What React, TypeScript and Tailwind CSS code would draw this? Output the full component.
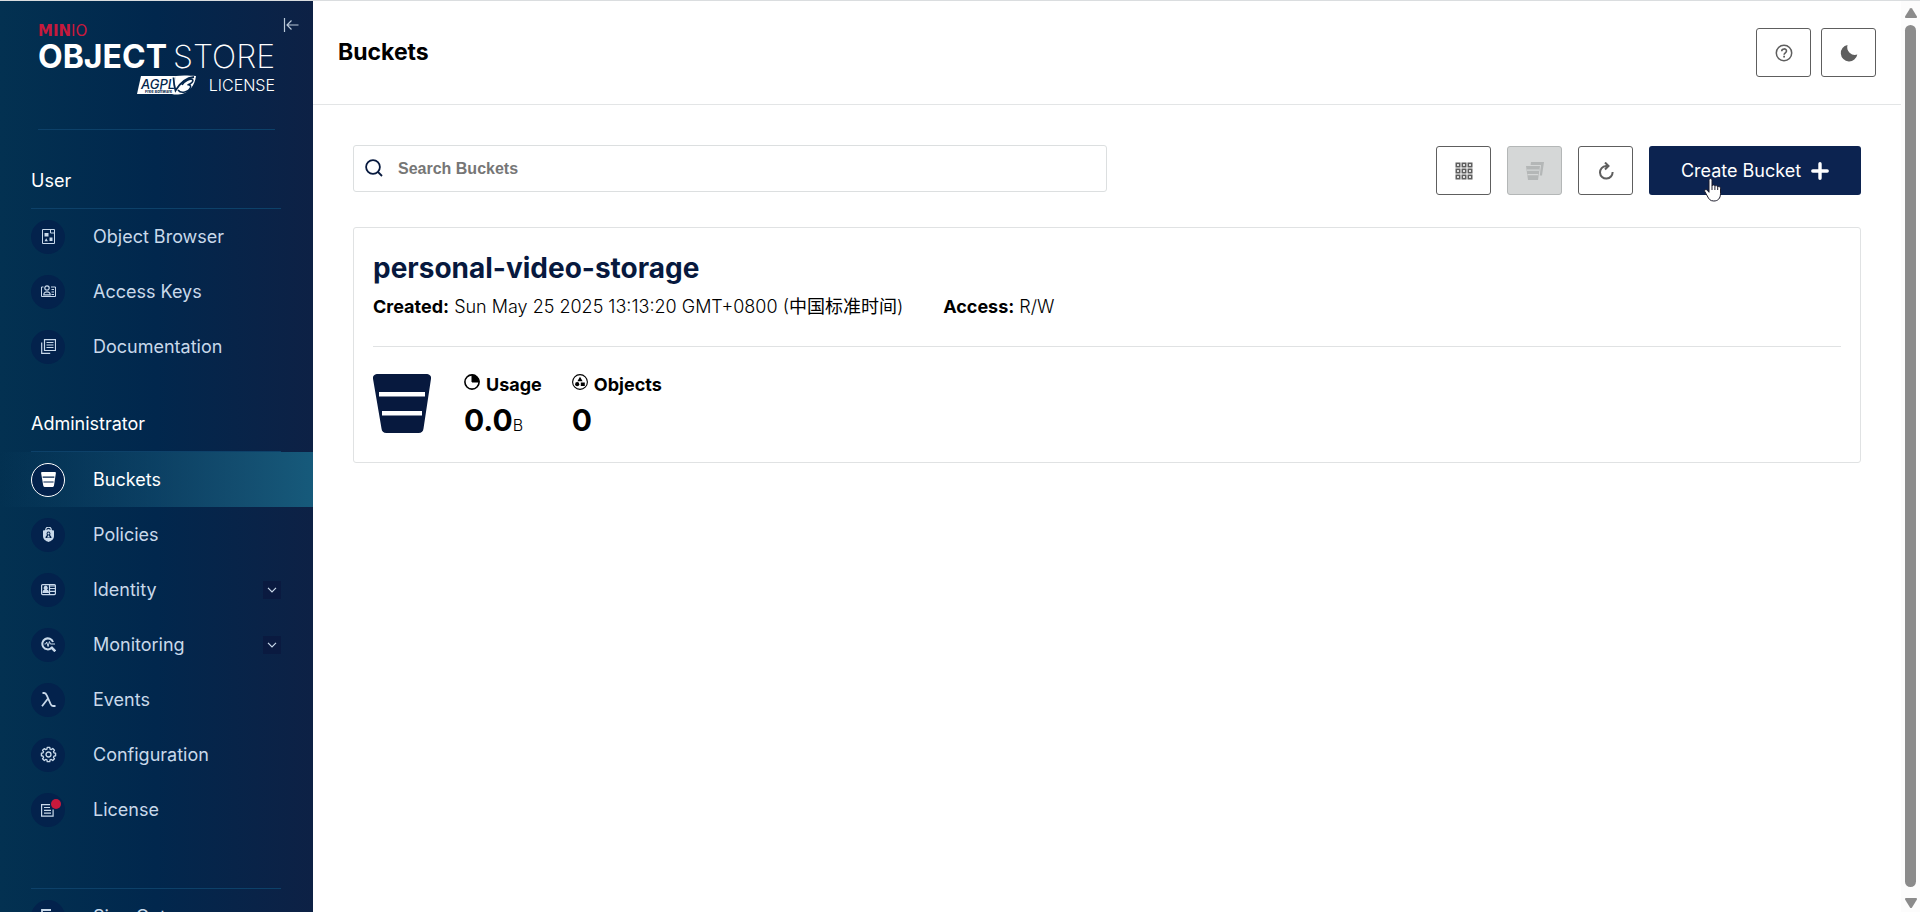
import type { ReactNode } from 'react'

type IconProps = { className?: string }

type NavEntry = {
  label: string
  icon: ReactNode
  active?: boolean
  expandable?: boolean
  alert?: boolean
}

function BucketIcon({ className }: IconProps) {
  return (
    <svg viewBox="0 0 58 59" className={className} fill="currentColor" fillRule="evenodd" aria-hidden="true">
      <path d="M4 0h50a4 4 0 0 1 4 4.800L50.500 54.500a5 5 0 0 1-5 4.500h-32a5 5 0 0 1-5-4.500L0 4.800A4 4 0 0 1 4 0ZM6 18v4.500h46V18ZM9 37v4.500h40V37Z" />
    </svg>
  )
}

function ObjectBrowserIcon() {
  return (
    <svg viewBox="0 0 15 15" className="size-[15px]" fill="none" stroke="currentColor" aria-hidden="true">
      <path d="M1.500.5h12v14h-12ZM9.500.5v3.500h4" />
      <path d="M3.500 4h4v3.500h-4ZM8.500 8.500h3V12h-3ZM3.500 12.200l1.700-3 1.700 3Z" fill="currentColor" stroke="none" />
    </svg>
  )
}

function AccessKeysIcon() {
  return (
    <svg viewBox="0 0 15 15" className="size-[15px]" fill="none" stroke="currentColor" aria-hidden="true">
      <path d="M2.500 3H.5v9.500h14V3H10" />
      <circle cx="6" cy="4" r="2.200" strokeWidth="1.200" />
      <path d="M2.800 10.800c0-4 6.400-4 6.400 0ZM10.500 5.500h2.500M10.500 8h2.500M10.500 10.500h2.500" strokeWidth="1.200" />
    </svg>
  )
}

function DocumentationIcon() {
  return (
    <svg viewBox="0 0 15 15" className="size-[15px]" fill="none" stroke="currentColor" aria-hidden="true">
      <path d="M3.500.7h11v10.800h-11ZM5.500 3.500h7M5.500 6h7M5.500 8.500h7M.7 3.500v10.800h8.500" strokeWidth="1.200" />
    </svg>
  )
}

function PoliciesIcon() {
  return (
    <svg viewBox="0 0 15 15" className="size-[15px]" fill="currentColor" aria-hidden="true">
      <path d="M4.700 4V3a2.800 2.800 0 0 1 5.600 0v1" fill="none" stroke="currentColor" strokeWidth="1.200" />
      <path
        fillRule="evenodd"
        d="M2 3.500c2.500 0 4-.8 5.500-1.500C9 2.700 10.500 3.500 13 3.500V9c0 3.500-3 5-5.500 6C5 14 2 12.500 2 9ZM7.500 4.600a2 2 0 0 0-1.300 3.500c-1 .5-1.700 1.500-1.700 3h6c0-1.500-.7-2.500-1.700-3A2 2 0 0 0 7.500 4.600Z"
      />
      <circle cx="7.500" cy="6.500" r="1" />
      <path d="M6 10.500h3L7.500 8Z" />
    </svg>
  )
}

function IdentityIcon() {
  return (
    <svg viewBox="0 0 15 15" className="size-[15px]" fill="none" stroke="currentColor" aria-hidden="true">
      <rect x=".6" y="2.600" width="13.800" height="10" rx="1" strokeWidth="1.200" />
      <path d="M8.500 2.500v10M8.500 4h6M8.500 6.500h6M8.500 9.300h6" strokeWidth="1.200" />
      <path d="M1.500 11c0-2 .8-3 2-3.400a2.100 2.100 0 1 1 2.400 0C7.200 8 8 9 8 11Z" fill="currentColor" stroke="none" />
    </svg>
  )
}

function MonitoringIcon() {
  return (
    <svg viewBox="0 0 15 15" className="size-[15px]" fill="none" stroke="currentColor" aria-hidden="true">
      <path d="M10.500 11A5.500 5.500 0 1 1 12 5" strokeWidth="2" />
      <path d="m10 10 4.300 4.300" strokeWidth="2.600" />
      <path d="M3.500 7h1.200l1-2 1.400 4.500 1.300-5 1 2.500h4.600" strokeWidth="1" />
    </svg>
  )
}

function EventsIcon() {
  return (
    <svg viewBox="0 0 15 15" className="size-[15px]" fill="none" stroke="currentColor" aria-hidden="true">
      <path d="M1.500 1h1.700c1.500 0 2 1 2.700 2.600l3.700 8.400c.6 1.500 1.300 2 2.400 2h2.500M7 6.500 1 14.200" strokeWidth="1.800" />
    </svg>
  )
}

function ConfigurationIcon() {
  return (
    <svg viewBox="0 0 24 24" className="size-[17px]" fill="none" stroke="currentColor" strokeWidth="1.900" strokeLinejoin="round" aria-hidden="true">
      <path d="m10.200 2-.4 2.400a8 8 0 0 0-1.800.7L6 3.700 3.600 6.100 5 8a8 8 0 0 0-.7 1.800L2 10.200v3.600l2.300.4A8 8 0 0 0 5 16l-1.400 2 2.500 2.400L8 19a8 8 0 0 0 1.800.7l.4 2.300h3.600l.4-2.300A8 8 0 0 0 16 19l2 1.400 2.400-2.500L19 16a8 8 0 0 0 .7-1.800l2.300-.4v-3.600l-2.300-.4A8 8 0 0 0 19 8l1.400-2L18 3.600 16 5a8 8 0 0 0-1.800-.7L13.800 2Z" />
      <circle cx="12" cy="12" r="3.500" />
    </svg>
  )
}

function LicenseIcon() {
  return (
    <svg viewBox="0 0 15 15" className="size-[15px]" fill="none" stroke="currentColor" aria-hidden="true">
      <path d="M9 2.600H.6v11.600h11.500V7.500M3 5.500h6M3 8.300h7M3 11.200h7" strokeWidth="1.200" />
    </svg>
  )
}

function SignOutIcon() {
  return (
    <svg viewBox="0 0 15 15" className="size-[15px]" fill="none" stroke="currentColor" strokeWidth="1.800" aria-hidden="true">
      <path d="M10 1H1v13h9M4 7.500h10M10.500 4 14 7.500 10.500 11" />
    </svg>
  )
}

function AgplBadge() {
  return (
    <svg viewBox="0 0 60 20" className="h-5 w-[60px]" aria-label="AGPL v3">
      <path d="M4 1h35l-2 18H0Z" fill="#fff" />
      <path d="M35 19 39 1c6-1 14-.5 20 0-1 9-7 18-18 18.500-3 0-5 0-6-.5Z" fill="#fff" />
      <path d="M36.500 2.500c.2 5 .8 9 2 13C43 8 48 3 57 2" fill="none" stroke="#04264c" strokeWidth="1.800" />
      <path d="M41 15c3 4 11 2 12.500-2.500.6-2-.8-3-3-2.600C54 9 57 6 55.500 4.600 53.500 3 47 6 45 10" fill="none" stroke="#04264c" strokeWidth="1.600" />
      <text x="4" y="13.500" fontFamily="Inter, sans-serif" fontSize="13" fontStyle="italic" fontWeight="500" fill="#04264c">AGPL</text>
      <text x="8" y="18" fontFamily="Inter, sans-serif" fontSize="4" fontWeight="700" fill="#04264c">Free Software</text>
    </svg>
  )
}

const userNav: NavEntry[] = [
  { label: 'Object Browser', icon: <ObjectBrowserIcon /> },
  { label: 'Access Keys', icon: <AccessKeysIcon /> },
  { label: 'Documentation', icon: <DocumentationIcon /> },
]

const adminNav: NavEntry[] = [
  { label: 'Buckets', icon: <BucketIcon className="size-[15px]" />, active: true },
  { label: 'Policies', icon: <PoliciesIcon /> },
  { label: 'Identity', icon: <IdentityIcon />, expandable: true },
  { label: 'Monitoring', icon: <MonitoringIcon />, expandable: true },
  { label: 'Events', icon: <EventsIcon /> },
  { label: 'Configuration', icon: <ConfigurationIcon /> },
  { label: 'License', icon: <LicenseIcon />, alert: true },
]

function NavItem({ label, icon, active, expandable, alert }: NavEntry) {
  return (
    <li>
      <a
        href="#"
        className={`flex h-[55px] items-center pl-[31px] pr-8 text-lg ${
          active ? 'bg-linear-to-r from-transparent to-[#165a7b] text-white' : 'text-[#c9d9ea]'
        }`}
      >
        <span
          className={`relative mr-7 flex size-[34px] items-center justify-center rounded-full bg-[#03224c] ${
            active ? 'border border-white' : ''
          }`}
        >
          {icon}
          {alert && <span className="absolute right-1 top-1.5 size-2.5 rounded-full bg-[#c8193c]" />}
        </span>
        {label}
        {expandable && (
          <span className="ml-auto flex size-[18px] items-center justify-center bg-[#0a1a40]">
            <svg viewBox="0 0 10 6" className="h-1.5 w-2.5" fill="none" stroke="currentColor" strokeWidth="1.200" aria-hidden="true">
              <path d="m1 .8 4 4 4-4" />
            </svg>
          </span>
        )}
      </a>
    </li>
  )
}

function NavSection({ title, items }: { title: string; items: NavEntry[] }) {
  return (
    <section>
      <h2 className="ml-[31px] mr-8 border-b border-[#0d4169] pb-[13px] text-lg text-white">{title}</h2>
      <ul>
        {items.map((item) => (
          <NavItem key={item.label} {...item} />
        ))}
      </ul>
    </section>
  )
}

function Sidebar() {
  return (
    <aside className="flex w-[313px] shrink-0 flex-col overflow-hidden bg-linear-to-r from-[#033151] via-[#01274d] to-[#0d2145]">
      <div className="relative mx-[38px] border-b border-[#0d4169] pb-[33px] pt-[22px] text-white">
        <button type="button" aria-label="Collapse menu" className="absolute -right-6 top-4 text-[#b9c8d8]">
          <svg viewBox="0 0 16 16" className="size-4" fill="none" stroke="currentColor" strokeWidth="1.200" aria-hidden="true">
            <path d="M1.500 1v14M15.500 8H4M8.500 3.500 4 8l4.500 4.500" />
          </svg>
        </button>
        <div className="flex items-baseline font-['DejaVu_Sans'] text-[15px] leading-4 text-[#c8193c]">
          <span className="font-bold">MIN</span>
          <span>IO</span>
        </div>
        <div className="flex justify-between whitespace-nowrap text-[32px] leading-[35px]">
          <span className="font-bold">OBJECT</span>
          <span className="font-extralight">STORE</span>
        </div>
        <div className="flex items-center justify-end gap-3 text-base font-light leading-[22px]">
          <AgplBadge />
          LICENSE
        </div>
      </div>

      <nav className="flex flex-col gap-9 pt-[37px]">
        <NavSection title="User" items={userNav} />
        <NavSection title="Administrator" items={adminNav} />
      </nav>

      <div className="mt-[51px] shrink-0">
        <div className="ml-[31px] mr-8 border-t border-[#0d4169]" />
        <ul>
          <NavItem label="Sign Out" icon={<SignOutIcon />} />
        </ul>
      </div>
    </aside>
  )
}

function IconButton({ label, disabled, children }: { label: string; disabled?: boolean; children: ReactNode }) {
  return (
    <button
      type="button"
      aria-label={label}
      disabled={disabled}
      className={`flex h-[49px] w-[55px] items-center justify-center rounded-[3px] border ${
        disabled ? 'border-[#b4b7b7] bg-[#d5d7d7] text-[#b4b7b7]' : 'border-[#5e5e5e] bg-white text-[#5e5e5e]'
      }`}
    >
      {children}
    </button>
  )
}

function PageHeader() {
  return (
    <header className="flex items-center justify-between border-b border-[#e3e5e6] px-[25px] py-[27px]">
      <h1 className="text-[23px] font-bold">Buckets</h1>
      <div className="flex gap-2.5">
        <IconButton label="Help">
          <svg viewBox="0 0 18 18" className="size-[18px]" fill="none" stroke="currentColor" aria-hidden="true">
            <circle cx="9" cy="9" r="7.700" strokeWidth="1.500" />
            <path d="M6.700 7.200c0-3 4.800-3 4.800-.2 0 1.900-2.400 1.700-2.400 3.700" strokeWidth="1.600" />
            <path d="M8.200 11.800h1.800v1.700H8.200Z" fill="currentColor" stroke="none" />
          </svg>
        </IconButton>
        <IconButton label="Dark mode">
          <svg viewBox="0 0 18 18" className="size-[18px]" fill="currentColor" aria-hidden="true">
            <path d="M7.500 1A8.300 8.300 0 1 0 17.300 10.500 7.800 7.800 0 0 1 7.500 1Z" />
          </svg>
        </IconButton>
      </div>
    </header>
  )
}

const gridCells = [0, 6, 12]

function Toolbar() {
  return (
    <div className="flex items-start justify-between">
      <div className="relative w-1/2">
        <svg viewBox="0 0 18 18" className="absolute left-3 top-3.5 size-[18px] text-[#07193e]" fill="none" stroke="currentColor" strokeWidth="1.800" aria-hidden="true">
          <circle cx="8" cy="8" r="6.900" />
          <path d="m13 13 4 4" />
        </svg>
        <input
          type="text"
          aria-label="Search Buckets"
          placeholder="Search Buckets"
          className="h-[47px] w-full rounded-[3px] border border-[#dcdfe0] pl-11 pr-4 font-['Liberation_Sans'] text-base font-bold outline-none placeholder:text-[#767676]"
        />
      </div>
      <div className="flex gap-4 pt-px">
        <IconButton label="Grid view">
          <svg viewBox="0 0 18 18" className="size-[18px]" fill="none" stroke="currentColor" strokeWidth="1.600" aria-hidden="true">
            {gridCells.map((y) => gridCells.map((x) => <rect key={`${x}-${y}`} x={x + 1.3} y={y + 1.3} width="3.400" height="3.400" />))}
          </svg>
        </IconButton>
        <IconButton label="Select multiple buckets" disabled>
          <svg viewBox="0 0 18 18" className="size-[18px]" fill="currentColor" aria-hidden="true">
            <path d="M5 0h13l-2 13.500h-2.200L15 3H4.600Z" />
            <path fillRule="evenodd" d="M0 4h14l-2 14H2ZM1 7.500v1.200h12V7.500ZM1.600 12v1.200h10.600V12Z" />
          </svg>
        </IconButton>
        <IconButton label="Refresh">
          <svg viewBox="0 0 18 18" className="size-[18px]" fill="none" stroke="currentColor" strokeWidth="2" aria-hidden="true">
            <path d="M10.800 4H9a6.300 6.300 0 1 0 6.600 6M8 .5 11.500 4 8 7.500" />
          </svg>
        </IconButton>
        <button type="button" className="relative flex h-[49px] w-[212px] items-center justify-center gap-2.5 rounded-[3px] bg-[#0c2350] text-lg text-white">
          Create Bucket
          <svg viewBox="0 0 18 18" className="size-[18px]" stroke="currentColor" strokeWidth="3.400" strokeLinecap="round" aria-hidden="true">
            <path d="M9 1.800v14.400M1.800 9h14.400" />
          </svg>
          {/* Pointer resting on the button */}
          <svg viewBox="0 0 18 24" className="absolute left-[55px] top-8 h-6 w-[18px]" fill="#fff" stroke="#1b1b2b" aria-hidden="true">
            <path d="M5 2.200c0-2.200 3-2.200 3 0V8c.3-1.500 2.800-1.300 2.900.4.600-1.300 2.700-.9 2.800.7.700-1.100 2.800-.7 2.800 1.200v5.200c0 5-2.600 7.500-6.700 7.500-3.700 0-5-2-6.500-5L.8 13.500c-.8-1.700 1.200-2.800 2.400-1.300L5 14.300Z" />
            <path d="M8 8v4M10.900 8.500V12M13.700 9.200V12" />
          </svg>
        </button>
      </div>
    </div>
  )
}

function BucketCard() {
  return (
    <article className="mt-8 rounded-[3px] border border-[#e0e2e3] px-[19px] pb-[18px] pt-5">
      <h2 className="text-[28px] font-bold leading-10 text-[#07193e]">personal-video-storage</h2>
      <div className="flex gap-10 border-b border-[#e0e2e3] pb-[25px] pt-[5px] text-lg leading-7">
        <p>
          <b>Created:</b> <span className="font-light">Sun May 25 2025 13:13:20 GMT+0800 (</span>中国标准时间<span className="font-light">)</span>
        </p>
        <p>
          <b>Access:</b> <span className="font-light">R/W</span>
        </p>
      </div>
      <div className="flex pt-[27px]">
        <BucketIcon className="mr-[33px] h-[59px] w-[58px] text-[#07193e]" />
        <div className="mr-[30px]">
          <div className="flex gap-1.5 text-lg font-bold leading-[22px]">
            <svg viewBox="0 0 16 16" className="size-4" fill="none" stroke="currentColor" aria-hidden="true">
              <circle cx="8" cy="8" r="7.100" strokeWidth="1.600" />
              <path d="M8 1v7h7a7 7 0 0 0-7-7Z" fill="currentColor" />
            </svg>
            Usage
          </div>
          <div className="text-[30px] font-bold leading-[48px]">
            0.0<span className="text-base font-light">B</span>
          </div>
        </div>
        <div>
          <div className="flex gap-1.5 text-lg font-bold leading-[22px]">
            <svg viewBox="0 0 16 16" className="size-4" fill="currentColor" aria-hidden="true">
              <circle cx="8" cy="8" r="7.400" fill="none" stroke="currentColor" strokeWidth="1.100" />
              <path d="m8 2.800 2.600 4.400H5.400ZM8.800 8.500h4v3.500h-4Z" />
              <circle cx="5.200" cy="10.200" r="2.100" />
            </svg>
            Objects
          </div>
          <div className="text-[30px] font-bold leading-[48px]">0</div>
        </div>
      </div>
    </article>
  )
}

function Scrollbar() {
  return (
    <div className="flex w-[19px] shrink-0 flex-col items-center justify-between gap-[7px] bg-[#fcfcfc] pb-1 pt-[7px] text-[#8b8b8b]" aria-hidden="true">
      <svg viewBox="0 0 12 10" className="h-2.5 w-3 shrink-0" fill="currentColor">
        <path d="M6 0c.5 0 .8.3 1 .6l4.800 7.600c.5.900 0 1.800-1 1.800H1.200c-1 0-1.500-.9-1-1.800L5 .6C5.200.3 5.500 0 6 0Z" />
      </svg>
      <div className="w-[11px] flex-1 rounded-full bg-[#8b8b8b]" />
      <svg viewBox="0 0 12 10" className="mt-1 h-2.5 w-3 shrink-0 rotate-180" fill="currentColor">
        <path d="M6 0c.5 0 .8.3 1 .6l4.800 7.600c.5.900 0 1.800-1 1.800H1.200c-1 0-1.500-.9-1-1.800L5 .6C5.200.3 5.500 0 6 0Z" />
      </svg>
    </div>
  )
}

export default function App() {
  return (
    <div className="flex h-screen overflow-hidden border-t border-[#dadddf] bg-white font-['Inter','Noto_Sans_CJK_SC',sans-serif] text-black">
      <Sidebar />
      <main className="min-w-0 flex-1">
        <PageHeader />
        <div className="p-10">
          <Toolbar />
          <BucketCard />
        </div>
      </main>
      <Scrollbar />
    </div>
  )
}
